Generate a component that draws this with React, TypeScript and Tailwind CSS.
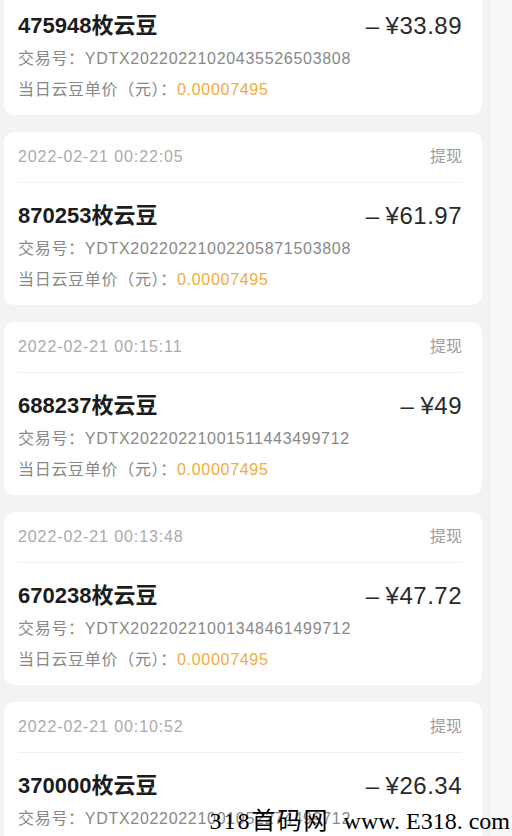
import React from 'react';

type Record = {
  time: string;
  beans: string;
  amount: string;
  tradeNo: string;
};

const records: Record[] = [
  { time: '2022-02-21 00:43:55', beans: '475948', amount: '33.89', tradeNo: 'YDTX20220221020435526503808' },
  { time: '2022-02-21 00:22:05', beans: '870253', amount: '61.97', tradeNo: 'YDTX20220221002205871503808' },
  { time: '2022-02-21 00:15:11', beans: '688237', amount: '49', tradeNo: 'YDTX20220221001511443499712' },
  { time: '2022-02-21 00:13:48', beans: '670238', amount: '47.72', tradeNo: 'YDTX20220221001348461499712' },
  { time: '2022-02-21 00:10:52', beans: '370000', amount: '26.34', tradeNo: 'YDTX20220221001052274499712' },
];

function RecordCard({ r }: { r: Record }) {
  return (
    <div className="bg-white rounded-[10px] pt-[14px] pb-[14px] pl-[14px] pr-[20px] h-[173px] shrink-0">
      <div className="flex items-center justify-between h-[22px]">
        <span className="text-[16px] leading-[22px] text-[#ababab] tracking-[0.9px]">{r.time}</span>
        <span className="text-[16px] leading-[22px] text-[#9d9d9d]">提现</span>
      </div>
      <div className="mt-[14px] h-px bg-[#f1f1f1]" />
      <div className="mt-[18px] flex items-center justify-between h-[30px]">
        <span className="text-[22px] leading-[30px] font-semibold text-[#1c1c1c]">{r.beans}枚云豆</span>
        <span className="text-[24px] leading-[30px] text-[#2a2a2a] tracking-[0.5px]">
          <span className="mr-[6px]">–</span>¥{r.amount}
        </span>
      </div>
      <div className="mt-[7px] text-[16px] leading-[22px] text-[#888888] tracking-[0.7px]">
        交易号：{r.tradeNo}
      </div>
      <div className="mt-[9px] text-[16px] leading-[22px] text-[#888888] tracking-[0.7px]">
        当日云豆单价（元）：<span className="text-[#f3ab3c]">0.00007495</span>
      </div>
    </div>
  );
}

export default function App() {
  return (
    <div
      className="relative w-[512px] h-[836px] overflow-hidden flex bg-[#f3f3f3]"
      style={{ fontFamily: '"Liberation Sans", "Noto Sans CJK SC", sans-serif' }}
    >
      <div className="w-[489px] pl-[4px] pr-[7px] flex flex-col gap-[17px] -mt-[58px]">
        {records.map((r) => (
          <RecordCard key={r.tradeNo} r={r} />
        ))}
      </div>
      <div className="flex-1 bg-[#f8f8f8] border-l border-[#ebebeb]" />

      {/* watermark */}
      <div
        className="absolute right-[2px] bottom-[2px] flex items-baseline gap-[14px] text-black text-[24px] leading-[26px]"
        style={{ fontFamily: '"Liberation Serif", "Noto Sans CJK SC", serif' }}
      >
        <span className="tracking-[2px]">318首码网</span>
        <span>www. E318. com</span>
      </div>
    </div>
  );
}
